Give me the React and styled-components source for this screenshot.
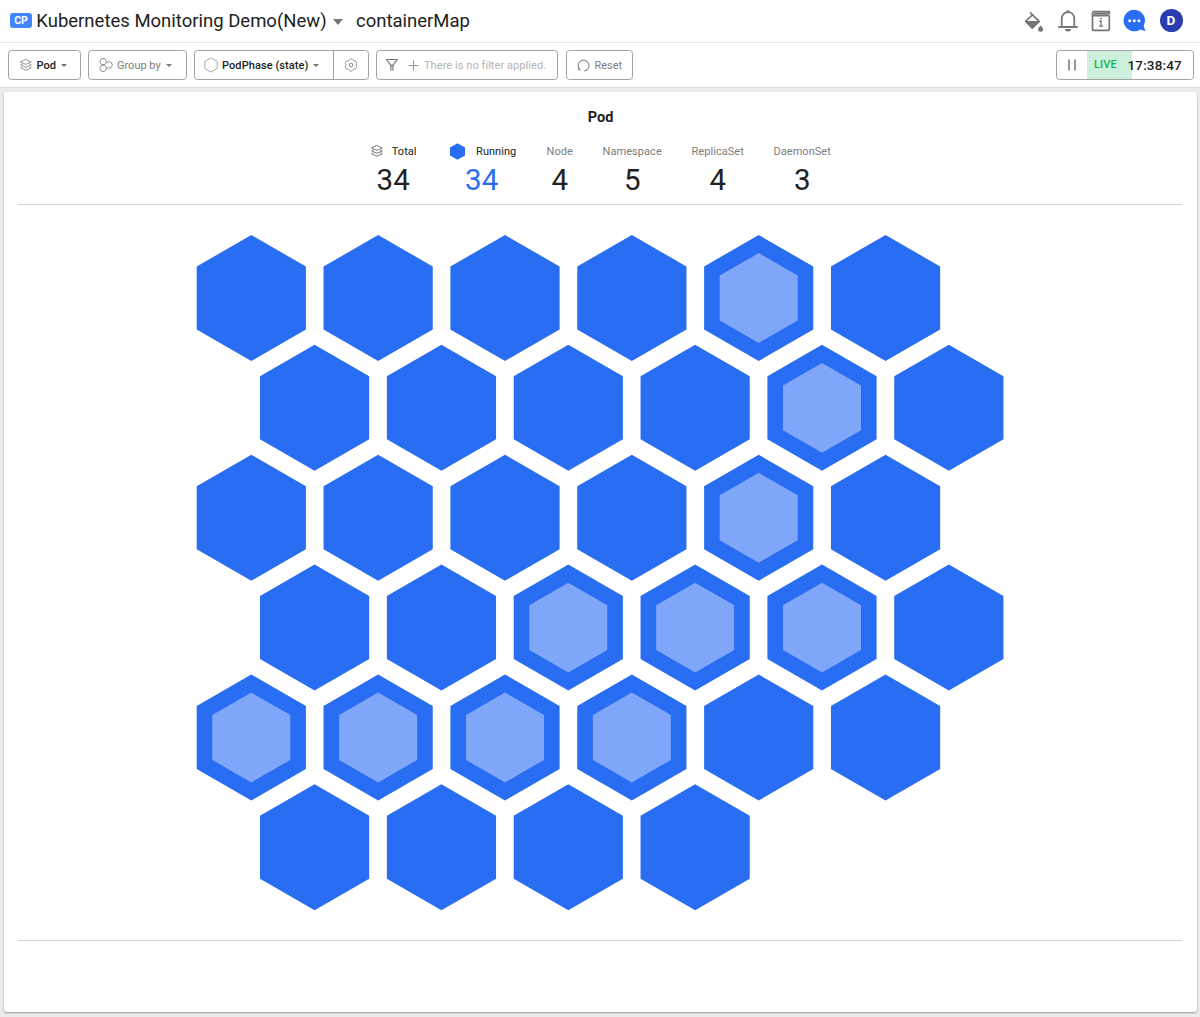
import React from "react";
import styled, { createGlobalStyle } from "styled-components";

const Global = createGlobalStyle`
  * { box-sizing: border-box; }
  html, body { margin: 0; background: #ececec; }
  body { font-family: Roboto, "Liberation Sans", sans-serif; color: #222; overflow: hidden; }
  svg { display: block; flex: none; }
`;

const Page = styled.div`
  width: 1200px;
  height: 1017px;
  display: flex;
  flex-direction: column;
`;

const Header = styled.header`
  height: 43px;
  padding: 0 17.5px 1px 10px;
  display: flex;
  align-items: center;
  background: #fff;
  border-bottom: 1px solid #e6e6e6;
`;

const ProductTag = styled.span`
  width: 22px;
  height: 15px;
  border-radius: 3px;
  background: #4286fb;
  color: #fff;
  font-size: 10.5px;
  font-weight: 700;
  line-height: 15px;
  text-align: center;
  margin-right: 4.3px;
`;

const Title = styled.span`
  width: ${(p) => p.$width}px;
  font-size: 18.5px;
  line-height: 24px;
  white-space: nowrap;
`;

const TitleCaret = styled.span`
  border: 5.5px solid transparent;
  border-top: 6px solid #757575;
  border-bottom: 0;
  margin: 3px 12.7px 0 6px;
`;

const HeaderActions = styled.div`
  margin-left: auto;
  display: flex;
  align-items: center;
  gap: 12px;
`;

const Avatar = styled.span`
  width: 23px;
  height: 23px;
  margin-left: 2px;
  border-radius: 50%;
  background: #2b3dae;
  color: #fff;
  font-size: 13.5px;
  font-weight: 700;
  line-height: 22px;
  text-align: center;
`;

const Toolbar = styled.div`
  height: 45px;
  padding: 7px 6.5px 0 7.5px;
  display: flex;
  align-items: flex-start;
  gap: 7.5px;
  background: #fff;
  border-bottom: 1px solid #dedede;
`;

const Control = styled.div`
  width: ${(p) => p.$width}px;
  height: 30px;
  display: flex;
  align-items: center;
  padding-left: ${(p) => p.$pad}px;
  border: 1px solid #a3a3a3;
  border-radius: 3.5px;
  font-size: 11px;
  font-weight: ${(p) => (p.$strong ? 500 : 400)};
  color: ${(p) => p.$color || "#222"};
  white-space: nowrap;
  overflow: hidden;
`;

const ControlLabel = styled.span`
  margin-left: ${(p) => p.$gap}px;
  letter-spacing: ${(p) => p.$spacing || 0}px;
`;

const Caret = styled.span`
  margin-left: 5px;
  border: 3px solid transparent;
  border-top: 3px solid #757575;
  border-bottom: 0;
`;

const SettingsSlot = styled.span`
  width: 35px;
  height: 30px;
  margin-left: auto;
  display: flex;
  align-items: center;
  justify-content: center;
  border-left: 1px solid #a3a3a3;
`;

const Clock = styled(Control)`
  margin-left: auto;
`;

const LiveBadge = styled.span`
  width: 45px;
  height: 28px;
  margin-left: 10px;
  padding-left: 7.5px;
  background: #cdf0dc;
  color: #0fb350;
  font-size: 11px;
  font-weight: 500;
  letter-spacing: 0.1px;
  line-height: 28px;
`;

const Time = styled.span`
  margin-left: -4px;
  font-size: 13.5px;
  font-weight: 500;
  letter-spacing: 0.15px;
  color: #222;
`;

const Card = styled.main`
  height: 920px;
  margin: 4px 3px 0 4px;
  padding: 0 15px 0 14px;
  display: flex;
  flex-direction: column;
  background: #fff;
  border-radius: 3px;
  box-shadow: 0 1px 2px rgba(0, 0, 0, 0.36);
`;

const CardHead = styled.div`
  height: 113px;
  padding-top: 17px;
  display: flex;
  flex-direction: column;
  align-items: center;
  border-bottom: 1px solid #d6d6d6;
`;

const CardTitle = styled.h1`
  margin: 0;
  padding-left: 1px;
  font-size: 14.5px;
  font-weight: 700;
  line-height: 18px;
`;

const Stats = styled.div`
  display: grid;
  grid-template-columns: 49px 68px 27px 60px 53px 58px;
  column-gap: 29px;
  margin-top: 15px;
  padding-left: 2.4px;
`;

const Stat = styled.div`
  display: flex;
  flex-direction: column;
  align-items: center;
  padding-right: ${(p) => p.$inset || 0}px;
`;

const StatLabel = styled.div`
  height: 18px;
  display: flex;
  align-items: center;
  gap: ${(p) => p.$gap || 0}px;
  font-size: 11px;
  letter-spacing: 0.05px;
  color: ${(p) => (p.$muted ? "#7d7d7d" : "#222")};
  white-space: nowrap;
`;

const StatValue = styled.div`
  margin-top: 2px;
  padding-right: ${(p) => p.$inset || 0}px;
  font-size: 29.5px;
  line-height: 36px;
  color: ${(p) => p.$color || "#222"};
`;

const MapArea = styled.section`
  height: 736px;
  border-bottom: 1px solid #d6d6d6;
`;

const Layers = ({ size = 12, color = "#8a8a8a" }) => (
  <svg width={size} height={size} viewBox="0 0 12 12" fill="none" stroke={color} strokeWidth="0.9" strokeLinejoin="round" strokeLinecap="round">
    <path d="M6 .6 11.3 3 6 5.4.7 3Z" />
    <path d="M2.2 5 .7 5.8 6 8.3l5.3-2.5L9.800 5M2.200 7.900.7 8.700 6 11.300l5.300-2.600-1.500-.8" />
  </svg>
);

const GroupIcon = () => (
  <svg width="14" height="14" viewBox="0 0 14 14" fill="none" stroke="#8a8a8a" strokeWidth="1">
    <path d="M2.700.7h2.900q.5 0 .7.500l1 2q.2.500 0 1l-1 2q-.2.500-.7.500H2.700q-.5 0-.7-.5l-1-2q-.2-.5 0-1l1-2q.2-.5.700-.5ZM2.700 7.300h2.900q.5 0 .7.500l1 2q.2.500 0 1l-1 2q-.2.500-.7.500H2.700q-.5 0-.7-.5l-1-2q-.2-.5 0-1l1-2q.2-.5.700-.5ZM7.300 4h4.100q.5 0 .7.500l1.100 2q.2.500 0 1l-1.100 2q-.2.500-.7.500H7.300" />
  </svg>
);

const HexOutline = () => (
  <svg width="14" height="16" viewBox="0 0 14 16" fill="none" stroke="#aaa" strokeWidth="1">
    <path d="M7 .9 13.2 4.4v7.2L7 15.1.8 11.6V4.4Z" />
  </svg>
);

const gearOutline = Array.from({ length: 72 }, (_, i) => {
  const a = (i / 72) * Math.PI * 2;
  const r = 5.65 - 0.6 * Math.cos(6 * a + Math.PI * 0);
  return `${(7 + r * Math.cos(a)).toFixed(2)},${(7 + r * Math.sin(a)).toFixed(2)}`;
}).join(" ");

const Gear = () => (
  <svg width="14" height="14" viewBox="0 0 14 14" fill="none" stroke="#8c8c8c" strokeWidth="1" strokeLinejoin="round">
    <polygon points={gearOutline} />
    <circle cx="7" cy="7" r="1.8" />
  </svg>
);

const Funnel = () => (
  <svg width="14" height="14" viewBox="0 0 14 14" fill="none" stroke="#757575" strokeWidth="1.2" strokeLinejoin="round">
    <path d="M.8 1.500h12.200M1.500 1.500 5.900 7.300v5.300M12.300 1.500 7.900 7.300v5.300M5.900 7.300h2" />
  </svg>
);

const Plus = () => (
  <svg width="11" height="11" viewBox="0 0 11 11" stroke="#999" strokeWidth="1.1">
    <path d="M5.500.5v10M.5 5.500h10" />
  </svg>
);

const ResetIcon = () => (
  <svg width="13" height="13" viewBox="0 0 13 13" fill="none" stroke="#888" strokeWidth="1.1">
    <path d="M7.200 11.900A5.400 5.400 0 1 0 2.600 10.200M.6 10.200H2.800V11.700" />
  </svg>
);

const PauseIcon = () => (
  <svg width="9" height="12" viewBox="0 0 9 12" fill="#999">
    <path d="M0 .5h2v11h-2ZM6 .5h2v11h-2Z" />
  </svg>
);

const PaintBucket = () => (
  <svg width="22" height="22" viewBox="0 0 22 22">
    <path d="M7 2.300 16.200 11.300 9.300 18 2.600 11.300 9.300 5" fill="none" stroke="#757575" strokeWidth="1.700" strokeLinejoin="round" />
    <path d="M2 11h14.800L10.300 18.200q-1 .9-2 0Z" fill="#757575" />
    <path d="M17.600 15.600q2.500 2.300 2.500 3.700a2.500 2.500 0 0 1-5 0q0-1.400 2.500-3.700Z" fill="#757575" />
  </svg>
);

const Bell = () => (
  <svg width="22" height="24" viewBox="0 0 22 24">
    <path d="M1.300 18h19.400M4.700 18V9.700c0-3.700 2.600-6.500 6.300-6.500s6.300 2.800 6.300 6.500V18" fill="none" stroke="#757575" strokeWidth="1.800" />
    <path d="M9 3.200a2 2 0 0 1 4 0ZM8 20h6a3 2.500 0 0 1-6 0Z" fill="#757575" />
  </svg>
);

const InfoBook = () => (
  <svg width="20" height="22" viewBox="0 0 20 22" fill="none" stroke="#757575" strokeWidth="1.700">
    <path d="M18.300 5.600H3.300Q1.500 5.600 1.500 3.600T3.300 1.600H18.300V3.600H3M1.500 3.600V18.700q0 1.700 1.700 1.700H16.600q1.700 0 1.700-1.700V5.600" strokeLinejoin="round" />
    <path d="M8.400 11h1.600v5.200M8 16.200h4M9.200 8.600h1.700" strokeWidth="1.300" />
  </svg>
);

const Chat = () => (
  <svg width="23" height="23" viewBox="0 0 23 23">
    <path d="M11.300.7A10.800 10.800 0 1 0 17.300 20.500L22.300 22.300 20.700 16.600A10.800 10.800 0 0 0 11.300.7Z" fill="#2a6df4" />
    <g fill="#fff"><circle cx="6.700" cy="11.800" r="1.500" /><circle cx="11.300" cy="11.800" r="1.500" /><circle cx="15.900" cy="11.800" r="1.500" /></g>
  </svg>
);

const SolidHex = () => (
  <svg width="15" height="17" viewBox="0 0 15 17"><path d="M7.500.3 15 4.400v8.200L7.500 16.700 0 12.600V4.400Z" fill="#296df3" /></svg>
);

const PITCH_X = 126.85;
const PITCH_Y = 109.87;
const podRows = ["....o.", "....o.", "....o.", "..ooo.", "oooo..", "...."];

const hexPoints = (cx, cy, w, h) =>
  [[0, -h], [w, -h / 2], [w, h / 2], [0, h], [-w, h / 2], [-w, -h / 2]]
    .map(([x, y]) => `${cx + x},${cy + y}`)
    .join(" ");

const PodMap = () => (
  <svg width="1164" height="735" viewBox="18 205 1164 735" role="img" aria-label="Pod">
    {podRows.flatMap((row, r) =>
      [...row].map((kind, c) => {
        const cx = 251.3 + (r % 2) * 63.3 + c * PITCH_X;
        const cy = 298 + r * PITCH_Y;
        return (
          <g key={`${r}-${c}`}>
            <polygon points={hexPoints(cx, cy, 54.6, 63)} fill="#296df3" />
            {kind === "o" && <polygon points={hexPoints(cx, cy, 39, 44.9)} fill="#7fa6f8" />}
          </g>
        );
      })
    )}
  </svg>
);

const resources = [["Node", 4], ["Namespace", 5], ["ReplicaSet", 4], ["DaemonSet", 3]];

export default function App() {
  return (
    <Page>
      <Global />
      <Header>
        <ProductTag>CP</ProductTag>
        <Title $width={291}>Kubernetes Monitoring Demo(New)</Title>
        <TitleCaret />
        <Title $width={115}>containerMap</Title>
        <HeaderActions>
          <PaintBucket />
          <Bell />
          <InfoBook />
          <Chat />
          <Avatar>D</Avatar>
        </HeaderActions>
      </Header>
      <Toolbar>
        <Control $width={73} $pad={11} $strong>
          <Layers />
          <ControlLabel $gap={5}>Pod</ControlLabel>
          <Caret />
        </Control>
        <Control $width={98.5} $pad={10} $color="#7d7d7d">
          <GroupIcon />
          <ControlLabel $gap={4}>Group by</ControlLabel>
          <Caret />
        </Control>
        <Control $width={174.5} $pad={9} $strong>
          <HexOutline />
          <ControlLabel $gap={4} $spacing={0.08}>PodPhase (state)</ControlLabel>
          <Caret />
          <SettingsSlot><Gear /></SettingsSlot>
        </Control>
        <Control $width={182} $pad={8} $color="#b3b3b3">
          <Funnel />
          <ControlLabel $gap={9}><Plus /></ControlLabel>
          <ControlLabel $gap={5} $spacing={0.06}>There is no filter applied.</ControlLabel>
        </Control>
        <Control $width={67} $pad={10} $color="#7d7d7d">
          <ResetIcon />
          <ControlLabel $gap={5}>Reset</ControlLabel>
        </Control>
        <Clock $width={138} $pad={11}>
          <PauseIcon />
          <LiveBadge>LIVE</LiveBadge>
          <Time>17:38:47</Time>
        </Clock>
      </Toolbar>
      <Card>
        <CardHead>
          <CardTitle>Pod</CardTitle>
          <Stats>
            <Stat $inset={4}>
              <StatLabel $gap={9}><Layers color="#666" />Total</StatLabel>
              <StatValue $inset={1}>34</StatValue>
            </Stat>
            <Stat>
              <StatLabel $gap={11}><SolidHex />Running</StatLabel>
              <StatValue $color="#296df3" $inset={3}>34</StatValue>
            </Stat>
            {resources.map(([name, count]) => (
              <Stat key={name}>
                <StatLabel $muted>{name}</StatLabel>
                <StatValue>{count}</StatValue>
              </Stat>
            ))}
          </Stats>
        </CardHead>
        <MapArea><PodMap /></MapArea>
      </Card>
    </Page>
  );
}
